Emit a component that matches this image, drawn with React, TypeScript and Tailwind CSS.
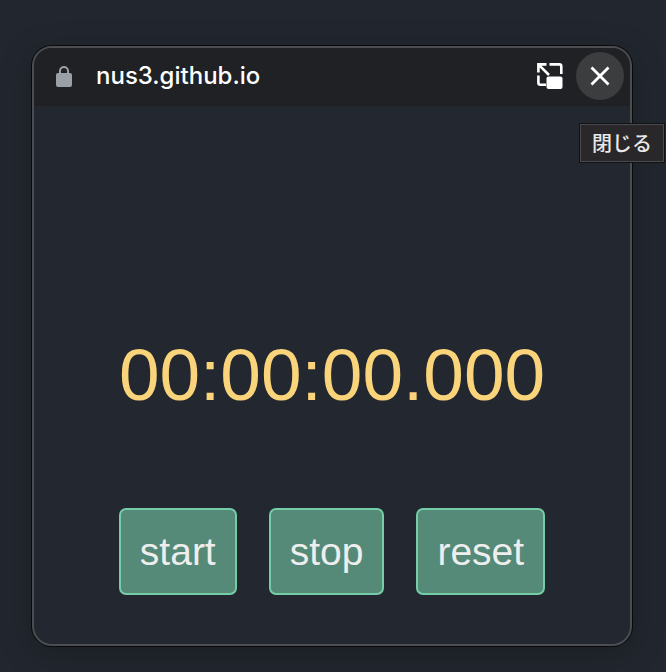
import type { ReactNode } from "react";

function LockIcon() {
  return (
    <svg width="16" height="22" viewBox="0 0 16 22" className="block" aria-hidden="true">
      <rect x="0" y="8" width="16" height="14" rx="2" fill="#9aa0a6" />
      <path d="M4 9V6a4 4 0 0 1 8 0V9" fill="none" stroke="#9aa0a6" strokeWidth="2" />
    </svg>
  );
}

function BackToTabIcon() {
  return (
    <svg width="26" height="26" viewBox="0 0 26 26" fill="none" stroke="#fff" strokeWidth="2.6" aria-hidden="true">
      <path d="M1.4 9.5V1.4H9.5M1.6 1.6l10.4 10.4" />
      <path d="M12.5 1.4h9.8a2 2 0 0 1 2 2V11" />
      <path d="M1.4 12.5v7.3a2 2 0 0 0 2 2H9" />
      <rect x="9.5" y="13.5" width="16" height="12.5" rx="2" fill="#fff" stroke="none" />
    </svg>
  );
}

function CloseIcon() {
  return (
    <svg width="20" height="20" viewBox="0 0 20 20" stroke="#fff" strokeWidth="2.8" aria-hidden="true">
      <path d="M1.5 1.5l17 17M18.5 1.5l-17 17" />
    </svg>
  );
}

function TimerButton({ children }: { children: ReactNode }) {
  return (
    <button
      type="button"
      className="h-[87px] rounded-[7px] border-2 border-[#74cda6] bg-[#548a77] px-[19px] font-['Liberation_Sans',Arial,sans-serif] text-[39px] leading-none text-[#eeeeee]"
    >
      {children}
    </button>
  );
}

export default function App() {
  return (
    <div className="min-h-screen bg-[#22272f] pt-[46px] pr-[34px] pb-[26px] pl-[32px] font-[Inter,sans-serif]">
      <section className="relative rounded-[20px] border-2 border-[#4b4d51] bg-[#23272f] shadow-[0_0_0_1px_#08090b,0_8px_32px_rgba(0,0,0,0.25)]">
        <header className="flex h-[58px] items-center rounded-t-[18px] bg-[#202124] pr-[6px] pb-0.5 pl-[22px]">
          <LockIcon />
          <span className="ml-6 text-2xl font-medium text-white">nus3.github.io</span>
          <button type="button" aria-label="タブに戻る" className="mr-[13px] ml-auto">
            <BackToTabIcon />
          </button>
          <button
            type="button"
            aria-label="閉じる"
            className="grid size-12 place-items-center rounded-full bg-[#3c3d3f]"
          >
            <CloseIcon />
          </button>
        </header>
        <main className="flex flex-col items-center pt-[221px] pb-[49px]">
          <time className="font-['Liberation_Sans',Arial,sans-serif] text-[73px] leading-[96px] text-[#fad47a]">
            00:00:00.000
          </time>
          <div className="mt-[85px] flex gap-8">
            <TimerButton>start</TimerButton>
            <TimerButton>stop</TimerButton>
            <TimerButton>reset</TimerButton>
          </div>
        </main>
        <div
          role="tooltip"
          className="absolute top-[76px] -right-[34px] border border-[#4a494b] bg-[#29272a] px-[11px] font-['Noto_Sans_CJK_JP',sans-serif] text-xl leading-9 font-medium text-[#e8e8e8] shadow-[0_0_0_1px_#111214]"
        >
          閉じる
        </div>
      </section>
    </div>
  );
}
